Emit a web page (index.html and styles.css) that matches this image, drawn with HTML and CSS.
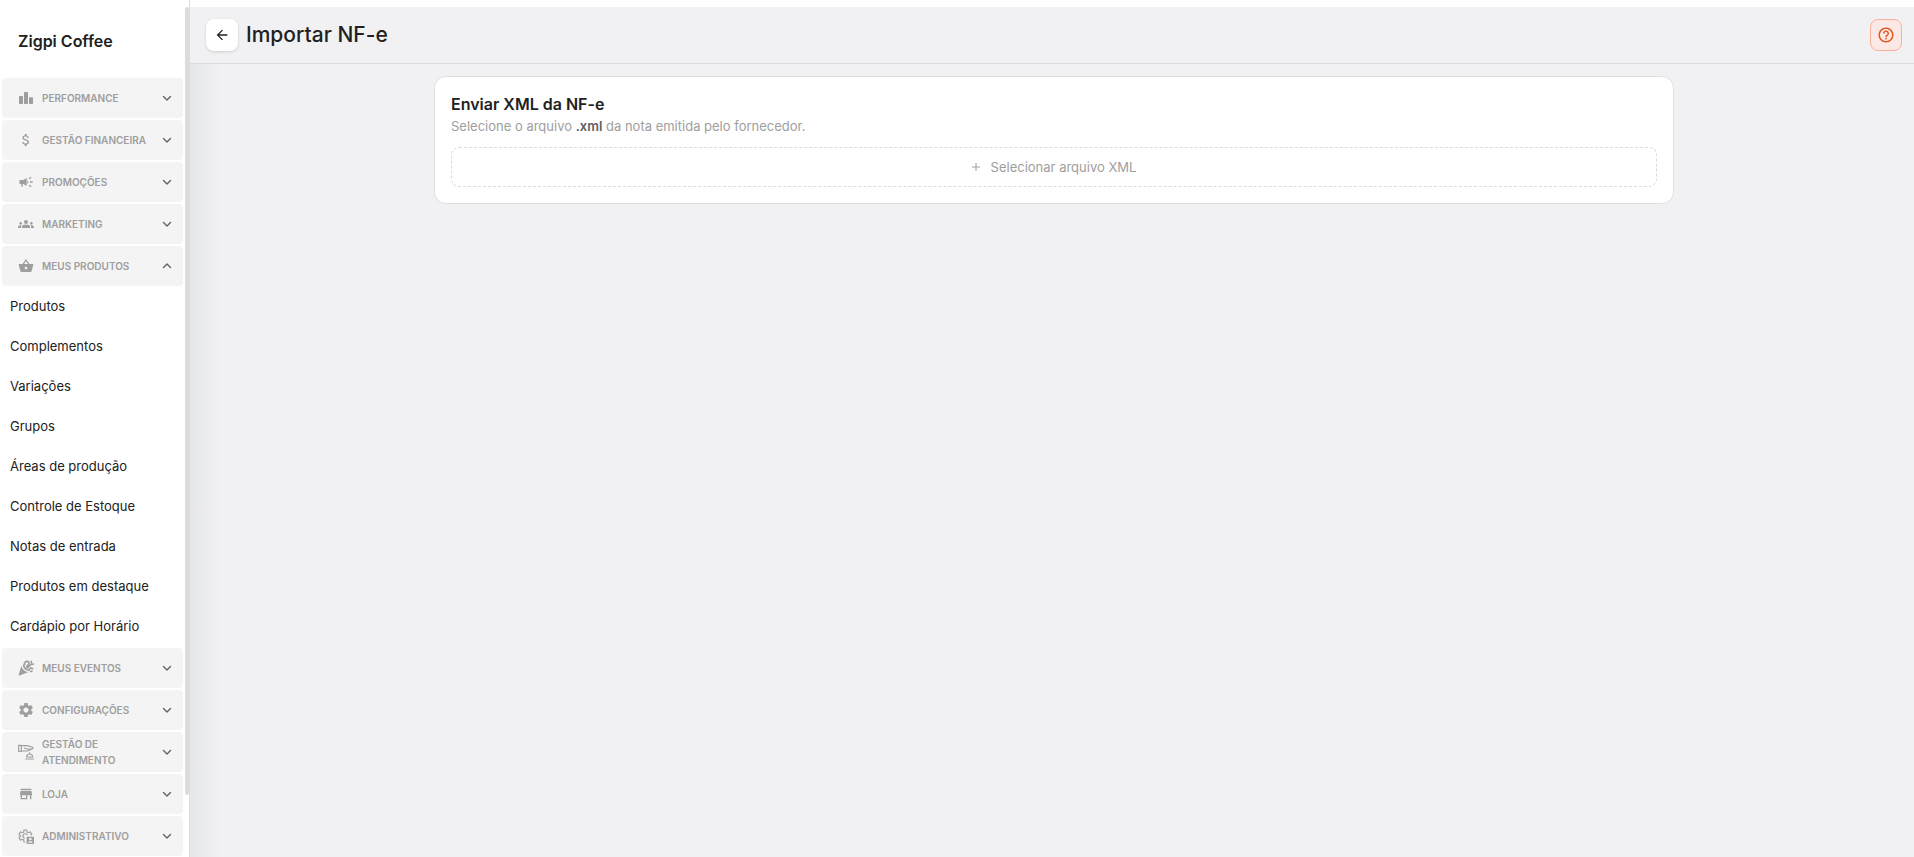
FILE: index.html
```html
<!DOCTYPE html>
<html lang="pt-BR">
<head>
    <meta charset="UTF-8">
    <title>Importar NF-e</title>
    <link rel="stylesheet" href="styles.css">
</head>
<body>
<svg class="sprite" aria-hidden="true">
    <symbol id="chevron" viewBox="0 0 12 12"><path d="M2.5 4.5 6 8l3.5-3.5" fill="none" stroke="currentColor" stroke-width="1.4" stroke-linecap="round" stroke-linejoin="round"/></symbol>
</svg>
<div class="app">
    <aside class="sidebar">
        <div class="brand">Zigpi Coffee</div>
        <nav class="menu">
            <button class="menu-item" type="button" aria-expanded="false">
                <svg class="icon" viewBox="0 0 24 24"><rect x="1.5" y="9" width="6" height="12" rx="1"/><rect x="9" y="3" width="6" height="18" rx="1"/><rect x="16.5" y="11" width="6" height="10" rx="1"/></svg>
                <span class="label">Performance</span>
                <svg class="chevron"><use href="#chevron"/></svg>
            </button>
            <button class="menu-item" type="button" aria-expanded="false">
                <svg class="icon" viewBox="0 0 24 24"><path d="M11.8 10.9c-2.27-.59-3-1.2-3-2.15 0-1.09 1.01-1.85 2.7-1.85 1.78 0 2.44.85 2.5 2.1h2.21c-.07-1.72-1.12-3.3-3.21-3.81V3h-3v2.16c-1.94.42-3.5 1.68-3.5 3.61 0 2.31 1.91 3.46 4.7 4.13 2.5.6 3 1.48 3 2.41 0 .69-.49 1.79-2.7 1.79-2.06 0-2.87-.92-2.98-2.1h-2.2c.12 2.19 1.76 3.42 3.68 3.83V21h3v-2.15c1.95-.37 3.5-1.5 3.5-3.55 0-2.84-2.43-3.81-4.7-4.4z"/></svg>
                <span class="label">Gestão financeira</span>
                <svg class="chevron"><use href="#chevron"/></svg>
            </button>
            <button class="menu-item" type="button" aria-expanded="false">
                <svg class="icon" viewBox="0 0 24 24"><path d="M18 11v2h4v-2h-4zm-2 6.61c.96.71 2.21 1.65 3.2 2.39.4-.53.8-1.07 1.2-1.6-.99-.74-2.24-1.68-3.2-2.4-.4.54-.8 1.08-1.2 1.61zM20.4 5.6c-.4-.53-.8-1.07-1.2-1.6-.99.74-2.24 1.68-3.2 2.4.4.53.8 1.07 1.2 1.6.96-.72 2.21-1.65 3.2-2.4zM4 9c-1.1 0-2 .9-2 2v2c0 1.1.9 2 2 2h1v4h2v-4h1l5 3V6L8 9H4zm11.5 3c0-1.33-.58-2.53-1.5-3.35v6.69c.92-.81 1.5-2.01 1.5-3.34z"/></svg>
                <span class="label">Promoções</span>
                <svg class="chevron"><use href="#chevron"/></svg>
            </button>
            <button class="menu-item" type="button" aria-expanded="false">
                <svg class="icon" viewBox="0 0 24 24"><path d="M12 12.75c1.63 0 3.07.39 4.24.9 1.08.48 1.76 1.56 1.76 2.73V18H6v-1.61c0-1.18.68-2.26 1.76-2.73 1.17-.52 2.61-.91 4.24-.91zM4 13c1.1 0 2-.9 2-2s-.9-2-2-2-2 .9-2 2 .9 2 2 2zm1.13 1.1c-.37-.06-.74-.1-1.13-.1-.99 0-1.93.21-2.78.58C.48 14.9 0 15.62 0 16.43V18h4.5v-1.61c0-.83.23-1.61.63-2.29zM20 13c1.1 0 2-.9 2-2s-.9-2-2-2-2 .9-2 2 .9 2 2 2zm4 3.43c0-.81-.48-1.53-1.22-1.85-.85-.37-1.79-.58-2.78-.58-.39 0-.76.04-1.13.1.4.68.63 1.46.63 2.29V18H24v-1.57zM12 6c1.66 0 3 1.34 3 3s-1.34 3-3 3-3-1.34-3-3 1.34-3 3-3z"/></svg>
                <span class="label">Marketing</span>
                <svg class="chevron"><use href="#chevron"/></svg>
            </button>
            <button class="menu-item" type="button" aria-expanded="true">
                <svg class="icon" viewBox="0 0 24 24"><path d="M17.21 9l-4.38-6.56c-.19-.28-.51-.42-.83-.42-.32 0-.64.14-.83.43L6.79 9H2c-.55 0-1 .45-1 1 0 .09.01.18.04.27l2.54 9.27c.23.84 1 1.46 1.92 1.46h13c.92 0 1.69-.62 1.93-1.46l2.54-9.27L23 10c0-.55-.45-1-1-1h-4.79zM9 9l3-4.4L15 9H9zm3 8c-1.1 0-2-.9-2-2s.9-2 2-2 2 .9 2 2-.9 2-2 2z"/></svg>
                <span class="label">Meus produtos</span>
                <svg class="chevron"><use href="#chevron"/></svg>
            </button>
            <div class="submenu">
                <a href="#">Produtos</a>
                <a href="#">Complementos</a>
                <a href="#">Variações</a>
                <a href="#">Grupos</a>
                <a href="#">Áreas de produção</a>
                <a href="#">Controle de Estoque</a>
                <a href="#">Notas de entrada</a>
                <a href="#">Produtos em destaque</a>
                <a href="#">Cardápio por Horário</a>
            </div>
            <button class="menu-item" type="button" aria-expanded="false">
                <svg class="icon" viewBox="0 0 24 24"><path d="M1 22 5 9c2 6 6 9 11 9L3 23c-1 .5-2.500 0-2-1z"/><path d="M7 8c1 5 4 8 9 8l3-1c-5 0-9-4-10-9z"/><path d="M10 7c-1-3 1-5 4-5 2 0 3 2 2 4l-3 4M14 12l5-5 4-1M16 15l3-3 3 1M20 2v2M19 17h2" fill="none" stroke="currentColor" stroke-width="2.5" stroke-linecap="round"/></svg>
                <span class="label">Meus eventos</span>
                <svg class="chevron"><use href="#chevron"/></svg>
            </button>
            <button class="menu-item" type="button" aria-expanded="false">
                <svg class="icon" viewBox="1 1 22 22"><path d="M19.14 12.94c.04-.3.06-.61.06-.94 0-.32-.02-.64-.07-.94l2.03-1.58c.18-.14.23-.41.12-.61l-1.92-3.32c-.12-.22-.37-.29-.59-.22l-2.39.96c-.5-.38-1.03-.7-1.62-.94l-.36-2.54c-.04-.24-.24-.41-.48-.41h-3.84c-.24 0-.43.17-.47.41l-.36 2.54c-.59.24-1.13.57-1.62.94l-2.39-.96c-.22-.08-.47 0-.59.22L2.74 8.87c-.12.21-.08.47.12.61l2.03 1.58c-.05.3-.09.63-.09.94s.02.64.07.94l-2.03 1.58c-.18.14-.23.41-.12.61l1.92 3.32c.12.22.37.29.59.22l2.39-.96c.5.38 1.03.7 1.62.94l.36 2.54c.05.24.24.41.48.41h3.84c.24 0 .44-.17.47-.41l.36-2.54c.59-.24 1.13-.56 1.62-.94l2.39.96c.22.08.47 0 .59-.22l1.92-3.32c.12-.22.07-.47-.12-.61l-2.01-1.58zM12 15.6c-1.98 0-3.6-1.62-3.6-3.6s1.62-3.6 3.6-3.6 3.6 1.62 3.6 3.6-1.62 3.6-3.6 3.6z"/></svg>
                <span class="label">Configurações</span>
                <svg class="chevron"><use href="#chevron"/></svg>
            </button>
            <button class="menu-item" type="button" aria-expanded="false">
                <svg class="icon" viewBox="0 0 24 24"><g fill="none" stroke="currentColor" stroke-width="1.7" stroke-linejoin="round"><path d="M1 2h4v9H1zM5 2.500h8l8 2c2 .5 2 3 0 3h-8M5 10.500h9l7-3M13 7.500 9 6"/><path d="M11 22.500h13M13 19.500c0-6 9-6 9 0zM17.500 15v-2.500"/></g></svg>
                <span class="label">Gestão de atendimento</span>
                <svg class="chevron"><use href="#chevron"/></svg>
            </button>
            <button class="menu-item" type="button" aria-expanded="false">
                <svg class="icon" viewBox="0 0 24 24"><path d="M20 4H4v2h16V4zm1 10v-2l-1-5H4l-1 5v2h1v6h10v-6h4v6h2v-6h1zm-9 4H6v-4h6v4z"/></svg>
                <span class="label">Loja</span>
                <svg class="chevron"><use href="#chevron"/></svg>
            </button>
            <button class="menu-item" type="button" aria-expanded="false">
                <svg class="icon" viewBox="0 0 24 24"><path d="M11 21H9l-.5-3-2-1-3 1-2-3.5L4 12 1.500 9.500l2-3.500 3 1 2-1L9 3h4l.5 3 2 1 3-1 2 3.5L19 11M10 15.500a3.500 3.500 0 1 1 4-5" fill="none" stroke="currentColor" stroke-width="1.8"/><path fill-rule="evenodd" d="M13 13h11v11H13zM18.5 14.500a2 2 0 1 0 .01 0zM15 22h7c0-3-7-3-7 0z"/></svg>
                <span class="label">Administrativo</span>
                <svg class="chevron"><use href="#chevron"/></svg>
            </button>
        </nav>
        <div class="scrollbar"></div>
    </aside>
    <main class="main">
        <header class="topbar">
            <button class="square-btn back" type="button" aria-label="Voltar">
                <svg width="16" height="16" viewBox="0 0 24 24"><path d="M20 11H7.83l5.59-5.59L12 4l-8 8 8 8 1.41-1.41L7.83 13H20v-2z"/></svg>
            </button>
            <h1 class="title">Importar NF-e</h1>
            <button class="square-btn help" type="button" aria-label="Ajuda">
                <svg width="18" height="18" viewBox="0 0 24 24"><path d="M11 18h2v-2h-2v2zm1-16C6.48 2 2 6.48 2 12s4.48 10 10 10 10-4.48 10-10S17.52 2 12 2zm0 18c-4.41 0-8-3.59-8-8s3.59-8 8-8 8 3.59 8 8-3.59 8-8 8zm0-14c-2.21 0-4 1.79-4 4h2c0-1.1.9-2 2-2s2 .9 2 2c0 2-3 1.75-3 5h2c0-2.25 3-2.5 3-5 0-2.21-1.79-4-4-4z"/></svg>
            </button>
        </header>
        <div class="content">
            <section class="card">
                <h2 class="card-title">Enviar XML da NF-e</h2>
                <p class="card-text">Selecione o arquivo <strong>.xml</strong> da nota emitida pelo fornecedor.</p>
                <button class="upload" type="button">
                    <svg width="8" height="8" viewBox="0 0 8 8"><path d="M4 0v8M0 4h8" fill="none" stroke="currentColor"/></svg>
                    Selecionar arquivo XML
                </button>
            </section>
        </div>
    </main>
</div>
</body>
</html>
```
FILE: styles.css
```css
* {
    box-sizing: border-box;
    margin: 0;
    padding: 0;
}

body {
    font-family: Inter, "Open Sans", sans-serif;
    font-size: 13px;
    color: #212121;
    background-color: #fff;
}

button {
    font: inherit;
    border: none;
    cursor: pointer;
}

svg {
    fill: currentColor;
    flex-shrink: 0;
}

.sprite {
    display: none;
}

.app {
    display: flex;
    height: 100vh;
    overflow: hidden;
}

/* sidebar */
.sidebar {
    position: relative;
    flex: 0 0 190px;
    padding: 7px 6px 0 2px;
    border-right: 1px solid #dcdcdc;
    overflow: hidden;
}

.brand {
    padding: 22px 16px 25px;
    font-size: 16px;
    font-weight: 600;
    line-height: 24px;
}

.menu {
    display: flex;
    flex-direction: column;
    gap: 2px;
}

.menu-item {
    display: flex;
    align-items: center;
    gap: 8px;
    height: 40px;
    padding: 0 10px 0 16px;
    border-radius: 4px;
    background-color: #f4f4f4;
    color: #9e9e9e;
    font-size: 10px;
    font-weight: 600;
    line-height: 16px;
    text-align: left;
    text-transform: uppercase;
}

.icon {
    width: 16px;
    height: 16px;
}

.label {
    flex: 1;
}

.chevron {
    width: 12px;
    height: 12px;
    color: #616161;
}

.menu-item[aria-expanded="true"] .chevron {
    transform: rotate(180deg);
}

.submenu {
    margin-top: -2px;
}

.submenu a {
    display: block;
    padding-left: 8px;
    line-height: 40px;
    color: #212121;
    text-decoration: none;
}

.scrollbar {
    position: absolute;
    top: 7px;
    right: 0;
    width: 4px;
    height: 92%;
    border-radius: 2px;
    background-color: #dcdcdc;
}

/* page */
.main {
    flex: 1;
    display: flex;
    flex-direction: column;
    margin-top: 7px;
    background-color: #f1f1f4;
}

.topbar {
    display: flex;
    align-items: center;
    gap: 8px;
    padding: 12px 12px 12px 16px;
    border-bottom: 1px solid #dcdce0;
}

.square-btn {
    display: flex;
    align-items: center;
    justify-content: center;
    width: 32px;
    height: 32px;
    border-radius: 8px;
}

.back {
    background-color: #fff;
    color: #212121;
    box-shadow: 0 1px 3px rgba(0, 0, 0, .15);
}

.help {
    margin-left: auto;
    border: 1px solid #fbb09a;
    background-color: #fce9e6;
    color: #e2571e;
}

.title {
    font-size: 21px;
    font-weight: 500;
    line-height: 32px;
}

.content {
    flex: 1;
    padding: 12px 12px 12px 16px;
    background-image: linear-gradient(to right, #e6e7eb, #f1f1f4 32px);
}

.card {
    max-width: 1240px;
    margin: 0 auto;
    padding: 16px;
    border: 1px solid #e0e0e0;
    border-radius: 12px;
    background-color: #fff;
}

.card-title {
    font-size: 16px;
    font-weight: 600;
    line-height: 22px;
}

.card-text {
    margin-bottom: 10px;
    font-size: 13px;
    line-height: 22px;
    color: #9e9e9e;
}

.card-text strong {
    font-weight: 600;
    color: #616161;
}

.upload {
    display: flex;
    align-items: center;
    justify-content: center;
    gap: 11px;
    width: 100%;
    height: 40px;
    border: 1px dashed #dcdcdc;
    border-radius: 8px;
    background-color: #fff;
    color: #9e9e9e;
    font-size: 13px;
}
```
